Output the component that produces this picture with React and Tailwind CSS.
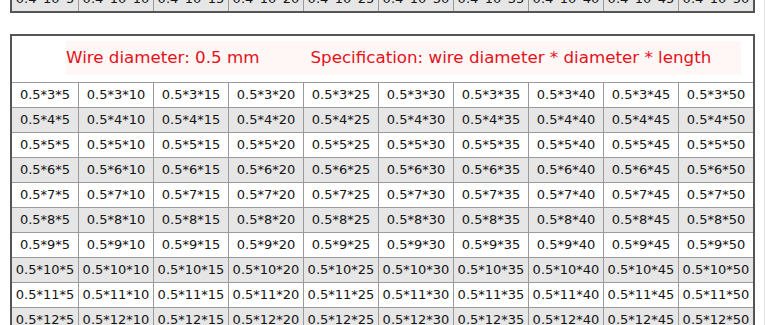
import React from "react";

const lengths = [5, 10, 15, 20, 25, 30, 35, 40, 45, 50];
const sizes = [3, 4, 5, 6, 7, 8, 9, 10, 11, 12];

const Row = ({ cells, gray, top = true }) => (
  <div
    className={
      "grid grid-cols-[66px_repeat(9,75px)] h-[25px] " +
      (top ? "border-t border-[#9a9a9a] " : "") +
      (gray ? "bg-[#e6e6e6]" : "bg-white")
    }
  >
    {cells.map((c, i) => (
      <div
        key={i}
        className={
          "flex items-center justify-center whitespace-nowrap " +
          (i > 0 ? "border-l border-[#9a9a9a]" : "")
        }
      >
        {c}
      </div>
    ))}
  </div>
);

export default function App() {
  return (
    <div className="w-[765px] h-[325px] overflow-hidden bg-white border-r border-[#e2e2e2] font-['DejaVu_Sans',sans-serif] text-[13px] text-[#141414]">
      {/* previous table, only its last row shows */}
      <div className="ml-[10px] w-[745px] -mt-[14px] border-x-2 border-b-2 border-[#555]">
        <Row cells={lengths.map((l) => `0.4*10*${l}`)} gray top={false} />
      </div>

      <div className="ml-[10px] mt-[21px] w-[745px] border-2 border-[#555]">
        <div className="h-[46px] flex items-center pl-[54px] pb-[2px]">
          <div className="flex items-center gap-[51px] bg-[#fff6f6] py-[4px] pr-[30px] text-[16.7px] text-[#e3121a] whitespace-nowrap">
            <span>Wire diameter: 0.5 mm</span>
            <span>Specification: wire diameter * diameter * length</span>
          </div>
        </div>
        {sizes.map((s, i) => (
          <Row key={s} cells={lengths.map((l) => `0.5*${s}*${l}`)} gray={i % 2 === 1} />
        ))}
      </div>
    </div>
  );
}
